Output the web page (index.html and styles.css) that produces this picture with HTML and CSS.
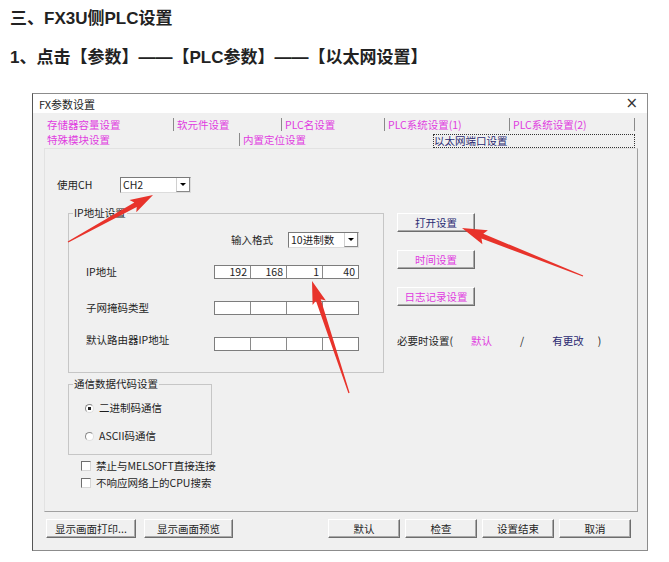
FILE: index.html
```html
<!DOCTYPE html>
<html lang="zh-CN">
<head>
  <meta charset="UTF-8">
  <meta name="viewport" content="width=device-width, initial-scale=1.0">
  <title>FX3U侧PLC设置</title>
  <link rel="stylesheet" href="styles.css">
</head>
<body>
  <h1>三、FX3U侧PLC设置</h1>
  <h2>1、点击【参数】——【PLC参数】——【以太网设置】</h2>

  <div class="dialog">
    <div class="titlebar">
      <span>FX参数设置</span>
      <span class="close">×</span>
    </div>

    <div class="dlg-body">
      <div class="tab-row row1">
        <span class="tab first">存储器容量设置</span>
        <span class="tab">软元件设置</span>
        <span class="tab">PLC名设置</span>
        <span class="tab">PLC系统设置(1)</span>
        <span class="tab last">PLC系统设置(2)</span>
      </div>
      <div class="tab-row row2">
        <span class="tab first">特殊模块设置</span>
        <span class="tab">内置定位设置</span>
        <span class="tab active">以太网端口设置</span>
      </div>

      <div class="panel">
        <div class="ch-row">
          <span class="ch-label">使用CH</span>
          <div class="combo"><span class="val">CH2</span><span class="arrow"></span></div>
        </div>

        <div class="main">
          <div class="left">
            <fieldset class="group ip-group">
              <legend>IP地址设置</legend>
              <div class="ip-body">
                <div class="format-row">
                  <span>输入格式</span>
                  <div class="combo"><span class="val">10进制数</span><span class="arrow"></span></div>
                </div>
                <div class="ip-row first">
                  <span>IP地址</span>
                  <div class="ipbox"><span>192</span><span>168</span><span>1</span><span>40</span></div>
                </div>
                <div class="ip-row">
                  <span>子网掩码类型</span>
                  <div class="ipbox"><span></span><span></span><span></span><span></span></div>
                </div>
                <div class="ip-row">
                  <span class="lbl-up">默认路由器IP地址</span>
                  <div class="ipbox"><span></span><span></span><span></span><span></span></div>
                </div>
              </div>
            </fieldset>

            <fieldset class="group code-group">
              <legend>通信数据代码设置</legend>
              <div class="code-body">
                <div class="opt"><span class="radio on"></span>二进制码通信</div>
                <div class="opt"><span class="radio"></span>ASCII码通信</div>
              </div>
            </fieldset>

            <div class="checks">
              <div class="opt"><span class="check"></span>禁止与MELSOFT直接连接</div>
              <div class="opt"><span class="check"></span>不响应网络上的CPU搜索</div>
            </div>
          </div>

          <div class="right">
            <div class="side-btns">
              <button class="btn side navy">打开设置</button>
              <button class="btn side pink">时间设置</button>
              <button class="btn side pink">日志记录设置</button>
            </div>
            <div class="note">
              <span>必要时设置(</span>
              <span class="n-def">默认</span>
              <span class="n-slash">/</span>
              <span class="n-chg">有更改</span>
              <span class="n-end">)</span>
            </div>
          </div>
        </div>
      </div>
    </div>

    <div class="footer">
      <div class="fgroup">
        <button class="btn w90">显示画面打印...</button>
        <button class="btn w89">显示画面预览</button>
      </div>
      <div class="fgroup right-group">
        <button class="btn w72">默认</button>
        <button class="btn w72">检查</button>
        <button class="btn w72">设置结束</button>
        <button class="btn w72">取消</button>
      </div>
    </div>
  </div>

  <!-- red callout arrows drawn over the screenshot -->
  <svg class="arrows" viewBox="0 0 669 562" width="669" height="562">
    <polygon points="68.3,242.5 136.7,206.9 136.3,212.3 153,195 129.5,200.1 134.3,202.5 67.7,241.5"/>
    <polygon points="583.2,275.4 483.3,233.8 487.9,230.2 462,228 482.4,244.2 481.5,238.4 582.8,276.6"/>
    <polygon points="349.6,392.8 320.7,299.2 325.8,300.6 312,281 312.6,305 315.9,300.8 348.4,393.2"/>
  </svg>
</body>
</html>
```

FILE: styles.css
```css
* { box-sizing: border-box; }
body {
  margin: 0;
  width: 669px;
  height: 562px;
  overflow: hidden;
  position: relative;
  background: #fff;
  color: #222;
  font-family: "Liberation Sans", "Noto Sans CJK SC", sans-serif;
}
h1, h2 {
  margin: 0;
  padding-left: 10px;
  font-size: 17px;
  line-height: 24px;
  font-weight: bold;
}
h1 { padding-top: 7px; }
h2 { margin-top: 15px; }

/* dialog window */
.dialog {
  margin: 23px 0 0 32px;
  width: 616px;
  background: #f0f0f0;
  border: 1px solid #8c8c8c;
  border-left-color: #555;
  font: 10.5px/14px "Noto Sans CJK SC", sans-serif;
  color: #1e1e1e;
}
.titlebar {
  height: 19px;
  background: #fff;
  display: flex;
  justify-content: space-between;
  align-items: center;
  padding: 0 9px 0 6px;
  font-size: 11px;
}
.titlebar .close { font: 15px/1 "DejaVu Sans", sans-serif; color: #333; }

.dlg-body { padding: 4px 9px 0 11px; }
.tab-row { display: grid; }
.row1 { grid-template-columns: 129px 108px 103px 125px 126px; height: 15px; }
.row2 { grid-template-columns: 195px 194px 202px; height: 16px; }
.tab {
  color: #e03ce0;
  padding-left: 3px;
  border-left: 1px solid #8a8a8a;
  line-height: 13px;
  height: 13px;
  margin-top: 1px;
  white-space: nowrap;
}
.tab.first { border-left: none; }
.tab.last { border-right: 1px solid #8a8a8a; }
.tab.active {
  color: #2a2a70;
  border: 1px dotted #333;
  padding-left: 0;
  margin-top: 2px;
  height: 14px;
  line-height: 12px;
}

.panel {
  height: 364px;
  border: 1px solid;
  border-color: #e2e2e2 #a0a0a0 #a0a0a0 #e2e2e2;
  padding: 28px 0 0 12px;
}
.ch-row { display: flex; align-items: center; height: 16px; }
.ch-label { width: 63px; }

.combo {
  display: flex;
  width: 71px;
  height: 16px;
  background: #fff;
  border: 1px solid;
  border-color: #7a7a7a #dcdcdc #dcdcdc #7a7a7a;
}
.combo .val { flex: 1; padding-left: 2px; line-height: 14px; }
.combo .arrow {
  width: 14px;
  border-left: 1px solid #d0d0d0;
  border-right: 1px solid #888;
  border-bottom: 1px solid #888;
  display: flex;
  align-items: center;
  justify-content: center;
}
.combo .arrow::after {
  content: "";
  border-left: 3px solid transparent;
  border-right: 3px solid transparent;
  border-top: 3px solid #000;
}

.main { display: flex; gap: 13px; margin-top: 13px; padding-left: 11px; }
.left { width: 316px; }

.group {
  margin: 0;
  padding: 0;
  border: 1px solid #c6c6c6;
  min-width: 0;
}
.group legend { padding: 0 1px; margin-left: 4px; line-height: 14px; }
.ip-body { padding: 12px 24px 21px 17px; }
.format-row {
  display: flex;
  justify-content: flex-end;
  align-items: center;
  gap: 15px;
  height: 16px;
}
.ip-row {
  display: flex;
  justify-content: space-between;
  align-items: center;
  height: 14px;
  margin-top: 22px;
}
.ip-row.first { margin-top: 17px; }
.lbl-up { margin-bottom: 9px; }
.ipbox {
  display: flex;
  width: 145px;
  height: 14px;
  background: #fff;
  border: 1px solid #7d7d7d;
}
.ipbox span {
  flex: 1;
  text-align: right;
  padding-right: 3px;
  line-height: 12px;
  border-right: 1px solid #8a8a8a;
}
.ipbox span:last-child { border-right: none; }

.code-group { width: 144px; margin-top: 4px; }
.code-body { padding: 10px 0 11px 16px; display: flex; flex-direction: column; gap: 14px; }
.opt { display: flex; align-items: center; gap: 5px; height: 14px; white-space: nowrap; }
.radio {
  width: 9px;
  height: 9px;
  border-radius: 50%;
  border: 1px solid #8a8a8a;
  border-right-color: #e0e0e0;
  border-bottom-color: #e0e0e0;
  background: #fff;
}
.radio.on { background: radial-gradient(circle, #222 1.6px, #fff 2px); }
.checks { margin-top: 4px; padding-left: 13px; display: flex; flex-direction: column; gap: 3px; }
.check {
  width: 10px;
  height: 10px;
  border: 1px solid;
  border-color: #6e6e6e #d6d6d6 #d6d6d6 #6e6e6e;
  background: #fff;
}

.right { padding-top: 7px; }
.side-btns { display: flex; flex-direction: column; gap: 18px; }
.btn {
  height: 19px;
  padding: 0;
  background: #f0f0f0;
  border: 1px solid;
  border-color: #fff #6d6d6d #6d6d6d #fff;
  box-shadow: inset -1px -1px #a9a9a9;
  font: inherit;
  color: #1e1e1e;
  display: flex;
  align-items: center;
  justify-content: center;
}
.btn.side { width: 78px; }
.navy { color: #2b2b72; }
.pink { color: #e03ce0; }
.note { display: flex; margin-top: 28px; line-height: 14px; }
.n-def { margin-left: 18px; color: #e03ce0; }
.n-slash { margin-left: 28px; }
.n-chg { margin-left: 28px; color: #2b2b72; }
.n-end { margin-left: 14px; }

.footer {
  display: flex;
  justify-content: space-between;
  padding: 7px 16px 12px 13px;
}
.fgroup { display: flex; gap: 8px; }
.right-group { gap: 5px; }
.w90 { width: 90px; }
.w89 { width: 89px; }
.w72 { width: 72px; }

.arrows {
  position: absolute;
  top: 0;
  left: 0;
  pointer-events: none;
}
.arrows polygon { fill: #e8332b; }
```
